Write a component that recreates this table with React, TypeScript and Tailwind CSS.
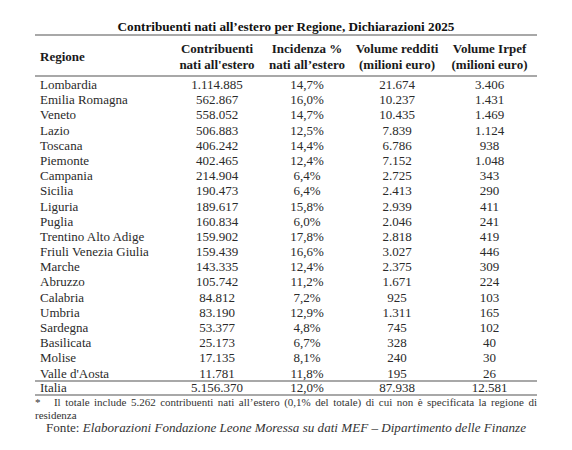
import React from "react";

const rows: [string, string, string, string, string][] = [
  ["Lombardia", "1.114.885", "14,7%", "21.674", "3.406"],
  ["Emilia Romagna", "562.867", "16,0%", "10.237", "1.431"],
  ["Veneto", "558.052", "14,7%", "10.435", "1.469"],
  ["Lazio", "506.883", "12,5%", "7.839", "1.124"],
  ["Toscana", "406.242", "14,4%", "6.786", "938"],
  ["Piemonte", "402.465", "12,4%", "7.152", "1.048"],
  ["Campania", "214.904", "6,4%", "2.725", "343"],
  ["Sicilia", "190.473", "6,4%", "2.413", "290"],
  ["Liguria", "189.617", "15,8%", "2.939", "411"],
  ["Puglia", "160.834", "6,0%", "2.046", "241"],
  ["Trentino Alto Adige", "159.902", "17,8%", "2.818", "419"],
  ["Friuli Venezia Giulia", "159.439", "16,6%", "3.027", "446"],
  ["Marche", "143.335", "12,4%", "2.375", "309"],
  ["Abruzzo", "105.742", "11,2%", "1.671", "224"],
  ["Calabria", "84.812", "7,2%", "925", "103"],
  ["Umbria", "83.190", "12,9%", "1.311", "165"],
  ["Sardegna", "53.377", "4,8%", "745", "102"],
  ["Basilicata", "25.173", "6,7%", "328", "40"],
  ["Molise", "17.135", "8,1%", "240", "30"],
  ["Valle d'Aosta", "11.781", "11,8%", "195", "26"],
];

const grid = "grid grid-cols-[137px_90px_90px_90px_95px]";

function Row({ r, h }: { r: string[]; h: string }) {
  return (
    <div className={`${grid} ${h} items-center text-[13px] text-[#2a2a2a]`}>
      <div className="pl-[5px] whitespace-nowrap">{r[0]}</div>
      <div className="text-center">{r[1]}</div>
      <div className="text-center">{r[2]}</div>
      <div className="text-center">{r[3]}</div>
      <div className="text-center">{r[4]}</div>
    </div>
  );
}

export default function App() {
  return (
    <div
      className="w-[572px] h-[450px] bg-white"
      style={{ fontFamily: '"Liberation Serif", "Times New Roman", serif' }}
    >
      <div className="w-[502px] ml-[35px] pt-[20px]">
        <div className="text-center font-bold text-[13.2px] leading-[14px] text-[#111] whitespace-nowrap">
          Contribuenti nati all’estero per Regione, Dichiarazioni 2025
        </div>
        <div className="h-[2px] bg-[#a8a8a8]" />
        <div className={`${grid} pt-[5px] pb-[2px] font-bold text-[13px] leading-[16px] text-[#1a1a1a]`}>
          <div className="pl-[5px] flex items-center">Regione</div>
          <div className="text-center whitespace-nowrap">
            Contribuenti
            <br />
            nati all'estero
          </div>
          <div className="text-center whitespace-nowrap">
            Incidenza %
            <br />
            nati all’estero
          </div>
          <div className="text-center whitespace-nowrap">
            Volume redditi
            <br />
            (milioni euro)
          </div>
          <div className="text-center whitespace-nowrap">
            Volume Irpef
            <br />
            (milioni euro)
          </div>
        </div>
        <div className="h-[2px] bg-[#a8a8a8]" />
        <div className="leading-[15.2px]">
          {rows.map((r) => (
            <Row key={r[0]} r={r} h="h-[15.2px]" />
          ))}
        </div>
        <div className="h-[2px] bg-[#a8a8a8] -mt-[1px]" />
        <Row r={["Italia", "5.156.370", "12,0%", "87.938", "12.581"]} h="h-[12px] leading-[12px]" />
        <div className="h-[2px] bg-[#a8a8a8]" />
        <div className="text-[11px] leading-[13px] text-[#333] text-justify">
          *&nbsp;&nbsp; Il totale include 5.262 contribuenti nati all’estero (0,1% del totale) di cui non è specificata la regione di residenza
        </div>
        <div className="text-center text-[13.1px] leading-[15px] text-[#333] -mt-[2px] whitespace-nowrap">
          Fonte: <i>Elaborazioni Fondazione Leone Moressa su dati MEF – Dipartimento delle Finanze</i>
        </div>
      </div>
    </div>
  );
}
